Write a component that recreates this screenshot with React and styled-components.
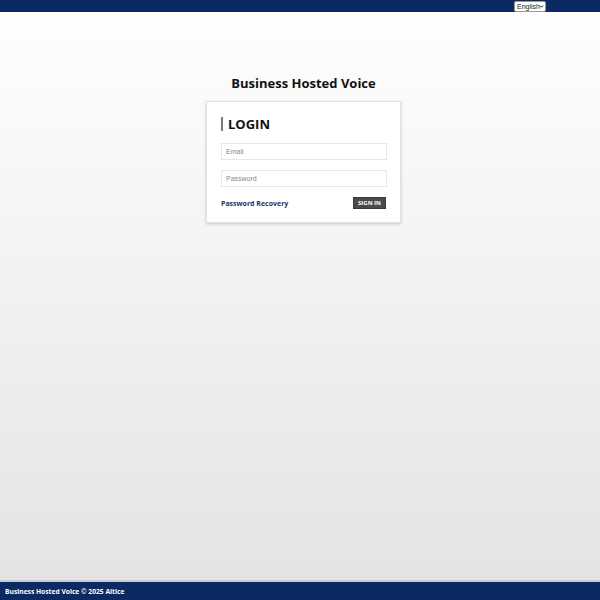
import React from "react";
import styled, { createGlobalStyle } from "styled-components";

const Global = createGlobalStyle`
  html, body { margin: 0; padding: 0; height: 100%; }
  body { font-family: "Open Sans", "Liberation Sans", sans-serif; }
  #root { height: 100%; }
`;

const Page = styled.div`
  height: 600px;
  display: flex;
  flex-direction: column;
  background: linear-gradient(to bottom, #ffffff 0%, #e3e3e3 100%);
`;

const TopBar = styled.div`
  height: 12px;
  background: #0b2a63;
  display: flex;
  justify-content: flex-end;
  align-items: center;
  padding-right: 54px;
`;

const SelectWrap = styled.div`
  position: relative;
  display: flex;
`;

const LangSelect = styled.select`
  appearance: none;
  -webkit-appearance: none;
  width: 32px;
  height: 11px;
  font-family: "Liberation Sans", Arial, sans-serif;
  font-size: 7px;
  line-height: 9px;
  padding: 0 0 0 2px;
  border: 1px solid #999;
  border-radius: 2px;
  background: #fff;
  color: #222;
`;

const Chevron = styled.svg`
  position: absolute;
  right: 2px;
  top: 3px;
  width: 5px;
  height: 5px;
  pointer-events: none;
`;

const Main = styled.main`
  flex: 1;
  display: flex;
  flex-direction: column;
  align-items: center;
  padding-top: 62px;
  padding-left: 7px;
`;

const Title = styled.h1`
  margin: 0 0 9px;
  font-size: 13px;
  font-weight: 700;
  color: #111;
  height: 18px;
  line-height: 18px;
`;

const Card = styled.div`
  width: 165px;
  background: #fff;
  border: 1px solid #e2e2e2;
  box-shadow: 0 1px 3px rgba(0, 0, 0, 0.18);
  padding: 15px 14px 13px 14px;
`;

const Heading = styled.h2`
  margin: 0 0 12px 0;
  padding-left: 5px;
  border-left: 2px solid #777;
  font-size: 13px;
  line-height: 14px;
  font-weight: 700;
  color: #111;
`;

const Input = styled.input`
  display: block;
  box-sizing: border-box;
  width: 166px;
  height: 17px;
  margin: 0 0 10px 0;
  border: 1px solid #e6e6e6;
  padding: 0 4px;
  font-family: "Liberation Sans", Arial, sans-serif;
  font-size: 7px;
  outline: none;
  &::placeholder { color: #888; }
`;

const Actions = styled.div`
  display: flex;
  justify-content: space-between;
  align-items: center;
`;

const Recovery = styled.a`
  font-size: 7px;
  font-weight: 700;
  color: #1c3468;
  text-decoration: none;
`;

const SignIn = styled.button`
  background: #4a4a4a;
  color: #fff;
  border: 1px solid #3a3a3a;
  font-family: "Open Sans", sans-serif;
  font-size: 6px;
  font-weight: 700;
  height: 12px;
  width: 33px;
  padding: 0;
  line-height: 10px;
`;

const Footer = styled.footer`
  height: 18px;
  border-top: 2px solid #c8ccd6;
  background: #0b2a63;
  color: #fff;
  font-size: 6.7px;
  font-weight: 700;
  display: flex;
  align-items: center;
  padding-left: 5px;
`;

export default function App() {
  return (
    <>
      <Global />
      <Page>
        <TopBar>
          <SelectWrap>
            <LangSelect defaultValue="en">
              <option value="en">English</option>
            </LangSelect>
            <Chevron viewBox="0 0 10 10">
              <path d="M1.5 3 L5 6.5 L8.5 3" fill="none" stroke="#222" strokeWidth="2" />
            </Chevron>
          </SelectWrap>
        </TopBar>
        <Main>
          <Title>Business Hosted Voice</Title>
          <Card>
            <Heading>LOGIN</Heading>
            <Input type="email" placeholder="Email" />
            <Input type="password" placeholder="Password" />
            <Actions>
              <Recovery href="#">Password Recovery</Recovery>
              <SignIn>SIGN IN</SignIn>
            </Actions>
          </Card>
        </Main>
        <Footer>Business Hosted Voice © 2025 Altice</Footer>
      </Page>
    </>
  );
}
